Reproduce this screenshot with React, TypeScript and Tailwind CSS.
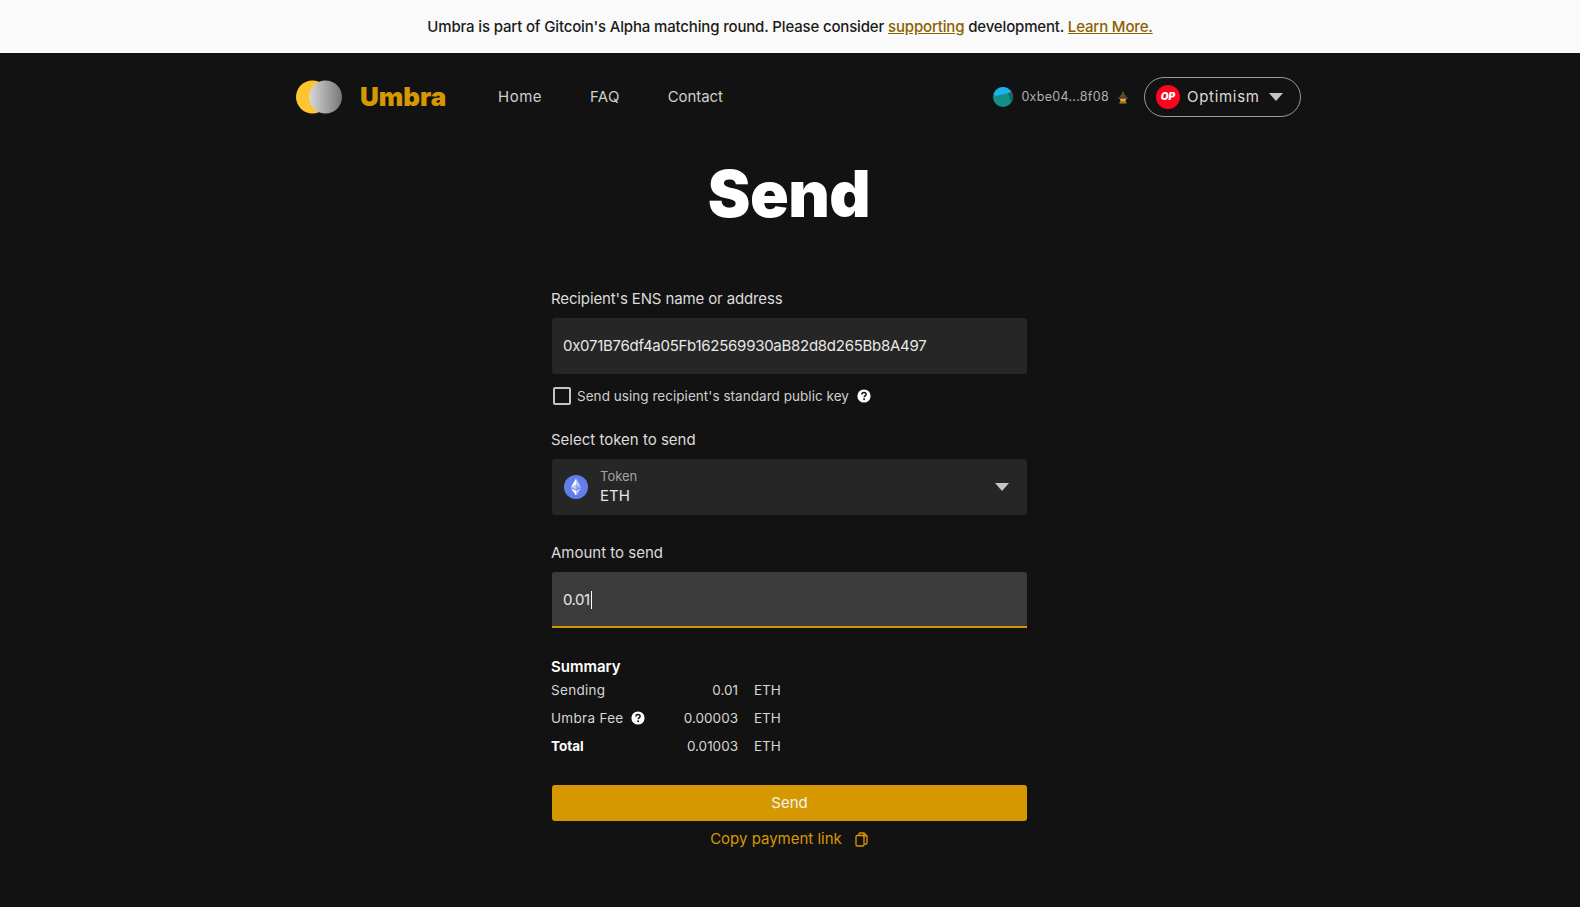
const font = { fontFamily: "Inter, 'Liberation Sans', sans-serif" };

function Help() {
  return (
    <svg width="14" height="14" viewBox="0 0 14 14" className="shrink-0">
      <circle cx="7" cy="7" r="6.6" fill="#fff" />
      <path d="M4.9 5.4c0-1.2 1-1.9 2.1-1.9 1.2 0 2.1.7 2.1 1.8 0 1.6-1.9 1.5-1.9 3" fill="none" stroke="#121212" strokeWidth="1.5" />
      <circle cx="7.1" cy="10.3" r="0.95" fill="#121212" />
    </svg>
  );
}

function Caret({ color, w = 14, h = 8 }: { color: string; w?: number; h?: number }) {
  return (
    <svg width={w} height={h} viewBox="0 0 14 8" className="shrink-0">
      <path d="M0 0h14L7 8z" fill={color} />
    </svg>
  );
}

function Logo() {
  return (
    <svg width="48" height="36" viewBox="0 0 48 36" className="shrink-0">
      <defs>
        <linearGradient id="moon" x1="0" x2="1" y1="0" y2="0">
          <stop offset="0" stopColor="#d8d8d8" />
          <stop offset="1" stopColor="#777" />
        </linearGradient>
      </defs>
      <circle cx="17.5" cy="18" r="16.5" fill="#fec52e" />
      <circle cx="30.5" cy="18" r="16.5" fill="url(#moon)" />
    </svg>
  );
}

function Avatar() {
  return (
    <svg width="20" height="20" viewBox="0 0 20 20" className="shrink-0">
      <clipPath id="av"><circle cx="10" cy="10" r="10" /></clipPath>
      <g clipPath="url(#av)">
        <rect width="20" height="20" fill="#149088" />
        <path d="M0 0h20v5L3 9 0 7z" fill="#1db2ec" />
        <path d="M15 6l5-1v15h-6l4-5z" fill="#0e6a6c" />
        <path d="M18 3h2v6h-1z" fill="#c01c3c" />
      </g>
    </svg>
  );
}

function Wizard() {
  return (
    <svg width="12" height="14" viewBox="0 0 12 14" className="shrink-0">
      <path d="M6 0.5L8 5.5h-4z" fill="#5e4c30" />
      <path d="M0.5 7.5h11L10 9H2z" fill="#6e5a38" />
      <path d="M3.5 5h5l1 2.5h-7z" fill="#5e4c30" />
      <path d="M3 9h6l-.6 2.4H3.6z" fill="#f2b01e" />
      <path d="M2 13.5l1.6-2.4h4.8l1.6 2.4z" fill="#a87a24" />
    </svg>
  );
}

function Ethereum() {
  return (
    <svg width="24" height="24" viewBox="0 0 24 24" className="shrink-0">
      <circle cx="12" cy="12" r="12" fill="#627eea" />
      <path d="M12 3.5v6.3l5.2 2.4z" fill="#fff" fillOpacity="0.6" />
      <path d="M12 3.5L6.8 12.2 12 9.8z" fill="#fff" />
      <path d="M12 15.6v4.9l5.2-7.2z" fill="#fff" fillOpacity="0.6" />
      <path d="M12 15.6l-5.2-2.3 5.2 7.2z" fill="#fff" />
      <path d="M12 14.6l5.2-2.4L12 9.8z" fill="#fff" fillOpacity="0.3" />
      <path d="M6.8 12.2l5.2 2.4V9.8z" fill="#fff" fillOpacity="0.6" />
    </svg>
  );
}

function Row({ label, value, bold, help }: { label: string; value: string; bold?: boolean; help?: boolean }) {
  return (
    <div className="flex h-[28px] items-center text-[13.5px] text-[#d6d6d6]">
      <div className={`-ml-px flex w-[96px] items-center gap-2 tracking-[0.3px] ${bold ? "font-bold tracking-[0px] text-white" : ""}`}>
        <span className="whitespace-nowrap">{label}</span>
        {help && <Help />}
      </div>
      <div className="w-[91px] text-right">{value}</div>
      <div className="ml-4">ETH</div>
    </div>
  );
}

export default function App() {
  return (
    <div style={font} className="h-[907px] overflow-hidden bg-[#121212] text-white">
      <div className="flex h-[53px] items-center justify-center bg-[#fafafa] pt-px text-[15px] font-medium tracking-[-0.16px] text-[#1a1a1a]">
        <span>
          Umbra is part of Gitcoin's Alpha matching round. Please consider{" "}
          <span className="text-[#8a6100] underline">supporting</span> development.{" "}
          <span className="text-[#8a6100] underline">Learn More.</span>
        </span>
      </div>

      <nav className="ml-[295px] flex h-[87px] w-[1006px] items-center justify-between">
        <div className="flex items-center">
          <Logo />
          <div className="ml-[17px] w-[138px] text-[26px] font-black text-[#d69800]">Umbra</div>
          <div className="flex gap-[48px] pt-[1px] text-[15px] text-[#cfcfcf]">
            <span className="tracking-[0.5px]">Home</span>
            <span className="tracking-[0.3px]">FAQ</span>
            <span className="tracking-[-0.1px]">Contact</span>
          </div>
        </div>
        <div className="flex items-center">
          <Avatar />
          <span className="ml-[8px] pt-px text-[12.5px] tracking-[0.3px] text-[#b0b0b0]">0xbe04...8f08</span>
          <span className="ml-[8px]"><Wizard /></span>
          <div className="ml-[15px] flex h-[40px] w-[157px] items-center rounded-[20px] border border-[#9a9a9a] pl-[11px] pr-[17px]">
            <div className="flex h-[24px] w-[24px] items-center justify-center rounded-full bg-[#ff0420] text-[10px] font-black italic text-white">OP</div>
            <span className="ml-[7px] flex-1 pt-px text-[15px] tracking-[0.7px] text-[#dcdcdc]">Optimism</span>
            <Caret color="#c4c4c4" />
          </div>
        </div>
      </nav>

      <h1 className="mt-[21px] pr-[2px] text-center text-[64px] leading-[66px] font-black tracking-[-0.5px]">Send</h1>

      <div className="ml-[552px] mt-[61px] w-[475px]">
        <label className="-ml-px block text-[15px] leading-[22px] tracking-[-0.13px] text-[#dcdcdc]">Recipient's ENS name or address</label>
        <div className="mt-[8px] flex h-[56px] items-center rounded-[3px] bg-[#262626] pl-[11px] pr-3 text-[15px] tracking-[-0.27px] text-[#e8e8e8]">
          0x071B76df4a05Fb162569930aB82d8d265Bb8A497
        </div>
        <div className="mt-[13px] flex h-[18px] items-center">
          <div className="ml-[1px] h-[18px] w-[18px] rounded-[2px] border-2 border-[#c4c4c4]" />
          <span className="ml-[6px] text-[13.5px] tracking-[0.04px] text-[#cfcfcf]">Send using recipient's standard public key</span>
          <span className="ml-[8px]"><Help /></span>
        </div>

        <label className="-ml-px mt-[24px] block text-[15px] leading-[22px] text-[#dcdcdc]">Select token to send</label>
        <div className="mt-[8px] flex h-[56px] items-center rounded-[3px] bg-[#262626] pl-3 pr-[18px]">
          <Ethereum />
          <div className="ml-[12px] flex-1 -translate-y-px">
            <div className="text-[13px] leading-[16px] text-[#a3a3a3]">Token</div>
            <div className="mt-[3px] text-[15px] leading-[18px] text-[#e8e8e8]">ETH</div>
          </div>
          <Caret color="#c4c4c4" w={14} h={8} />
        </div>

        <label className="-ml-px mt-[27px] block text-[15px] leading-[22px] text-[#dcdcdc]">Amount to send</label>
        <div className="mt-[8px] flex h-[56px] items-center rounded-t-[3px] border-b-2 border-[#d69800] bg-[#3b3b3b] pl-[11px] pr-3 pt-[2px] text-[15px] tracking-[-0.5px] text-[#e8e8e8]">
          0.01<span className="ml-[1px] h-[18px] w-px bg-white" />
        </div>

        <div className="-ml-px mt-[29px] text-[15px] leading-[20px] font-semibold text-white">Summary</div>
        <div className="-mt-[1px]">
          <Row label="Sending" value="0.01" />
          <Row label="Umbra Fee" value="0.00003" help />
          <Row label="Total" value="0.01003" bold />
        </div>

        <div className="mt-[25px] flex h-[36px] items-center justify-center rounded-[3px] bg-[#d69800] text-[15px] text-[#f2f2f2]">Send</div>
        <div className="mt-[7px] flex items-center justify-center gap-[13px] pr-[1px] text-[15px] text-[#d69800]">
          <span>Copy payment link</span>
          <svg width="13" height="15" viewBox="0 0 13 15" fill="none" stroke="#d69800" strokeWidth="1.3" className="shrink-0">
            <rect x="1" y="3.5" width="8" height="10.5" rx="1.2" />
            <path d="M4 3.4V2a1 1 0 0 1 1-1h4l3 3v7a1 1 0 0 1-1 1H9.2M8.8 1v3.2H12" />
          </svg>
        </div>
      </div>
    </div>
  );
}
